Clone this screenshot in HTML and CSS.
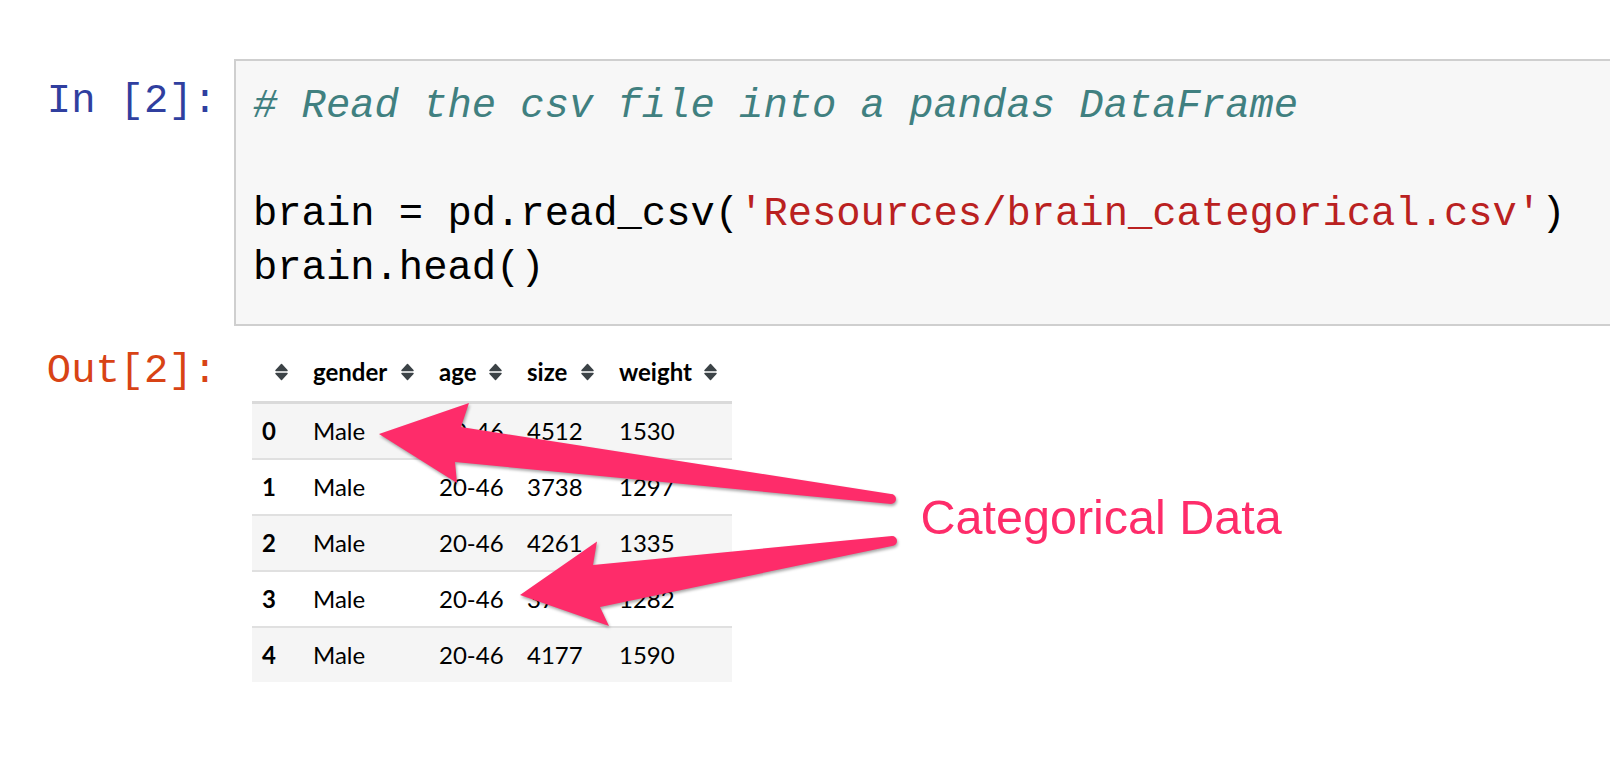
FILE: index.html
```html
<!DOCTYPE html>
<html>
<head>
<meta charset="utf-8">
<link rel="stylesheet" href="styles.css">
</head>
<body>
<svg class="defs" width="0" height="0">
  <symbol id="sort" viewBox="0 0 15 18">
    <path d="M7.5 1.5 L13 7.4 H2 Z M2 10.6 H13 L7.5 16.5 Z" fill="#3c4347" stroke="#3c4347" stroke-width="1.5" stroke-linejoin="round"/>
  </symbol>
</svg>
<div class="notebook">
  <div class="cell input">
    <div class="prompt in">In [2]:</div>
    <div class="code"><pre><span class="c1"># Read the csv file into a pandas DataFrame</span>

brain = pd.read_csv(<span class="s1">'Resources/brain_categorical.csv'</span>)
brain.head()</pre></div>
  </div>
  <div class="cell output">
    <div class="prompt out">Out[2]:</div>
    <table class="df">
      <colgroup>
        <col class="w-idx"><col class="w-gender"><col class="w-age"><col class="w-size"><col class="w-weight">
      </colgroup>
      <thead>
        <tr>
          <th><div class="th-inner"><span></span><svg class="sort"><use href="#sort"/></svg></div></th>
          <th><div class="th-inner"><span>gender</span><svg class="sort"><use href="#sort"/></svg></div></th>
          <th><div class="th-inner"><span>age</span><svg class="sort"><use href="#sort"/></svg></div></th>
          <th><div class="th-inner"><span>size</span><svg class="sort"><use href="#sort"/></svg></div></th>
          <th><div class="th-inner"><span>weight</span><svg class="sort"><use href="#sort"/></svg></div></th>
        </tr>
      </thead>
      <tbody>
        <tr><td class="idx">0</td><td>Male</td><td>20-46</td><td>4512</td><td>1530</td></tr>
        <tr><td class="idx">1</td><td>Male</td><td>20-46</td><td>3738</td><td>1297</td></tr>
        <tr><td class="idx">2</td><td>Male</td><td>20-46</td><td>4261</td><td>1335</td></tr>
        <tr><td class="idx">3</td><td>Male</td><td>20-46</td><td>3777</td><td>1282</td></tr>
        <tr><td class="idx">4</td><td>Male</td><td>20-46</td><td>4177</td><td>1590</td></tr>
      </tbody>
    </table>
  </div>
</div>
<svg class="annot" width="1610" height="782" viewBox="0 0 1610 782">
  <path class="arrow" d="M379 434 L469 403 L461 427 L891 494 A5 5 0 0 1 891 504 L455 462 L457 483 Z"/>
  <path class="arrow" d="M520 595 L597 541.5 L593 565 L892 536 A5 5 0 0 1 892 546 L600 607 L609 626 Z"/>
</svg>
<div class="label">Categorical Data</div>
</body>
</html>
```
FILE: styles.css
```css
html, body {
  margin: 0;
  padding: 0;
  background: #ffffff;
}

body {
  width: 1610px;
  height: 782px;
  overflow: hidden;
  position: relative;
}

.defs {
  position: absolute;
}

.notebook {
  padding-top: 59px;
}

.cell {
  display: flex;
  align-items: flex-start;
}

.prompt {
  flex: 0 0 234px;
  box-sizing: border-box;
  text-align: right;
  padding-right: 17px;
  font-family: "Liberation Mono", monospace;
  font-size: 40.5px;
  line-height: 54px;
  white-space: pre;
}

.prompt.in {
  color: #303F9F;
  padding-top: 15px;
}

.prompt.out {
  color: #D84315;
  padding-top: 2px;
}

.code {
  flex: 1;
  background: #f7f7f7;
  border: 2px solid #cfcfcf;
  border-right: none;
  padding: 18px 0 29px 17px;
}

.code pre {
  margin: 0;
  font-family: "Liberation Mono", monospace;
  font-size: 40.5px;
  line-height: 54px;
  color: #000000;
}

.c1 {
  color: #408080;
  font-style: italic;
}

.s1 {
  color: #BA2121;
}

.output {
  margin-top: 16px;
}

.df {
  margin-left: 18px;
  border-collapse: separate;
  border-spacing: 0;
  table-layout: fixed;
  width: 480px;
  font-family: "Lato", sans-serif;
  font-size: 24px;
  color: #000000;
}

.w-idx { width: 51px; }
.w-gender { width: 126px; }
.w-age { width: 88px; }
.w-size { width: 92px; }
.w-weight { width: 123px; }

.df th {
  text-align: left;
  font-weight: 700;
  padding: 15px 14px 15px 10px;
  line-height: 29px;
  border-bottom: 3px solid #dadada;
}

.th-inner {
  display: flex;
  justify-content: space-between;
  align-items: center;
}

.sort {
  width: 15px;
  height: 18px;
  flex: 0 0 15px;
}

.df td {
  padding: 12px 10px 13px;
  line-height: 29px;
  text-align: left;
  white-space: nowrap;
}

.df td.idx {
  font-weight: 700;
}

.df tbody tr:nth-child(odd) td {
  background: #f5f5f5;
}

.df tbody tr:not(:last-child) td {
  border-bottom: 2px solid #e0e0e0;
}

.annot {
  position: absolute;
  left: 0;
  top: 0;
  pointer-events: none;
}

.arrow {
  fill: #fe2c6a;
  filter: drop-shadow(1px 2px 1.5px rgba(0, 0, 0, 0.35));
}

.label {
  position: absolute;
  left: 920.5px;
  top: 492.5px;
  font-family: "Liberation Sans", Arial, sans-serif;
  font-size: 48.5px;
  line-height: 48.5px;
  color: #fe2c6a;
  white-space: nowrap;
}
```
